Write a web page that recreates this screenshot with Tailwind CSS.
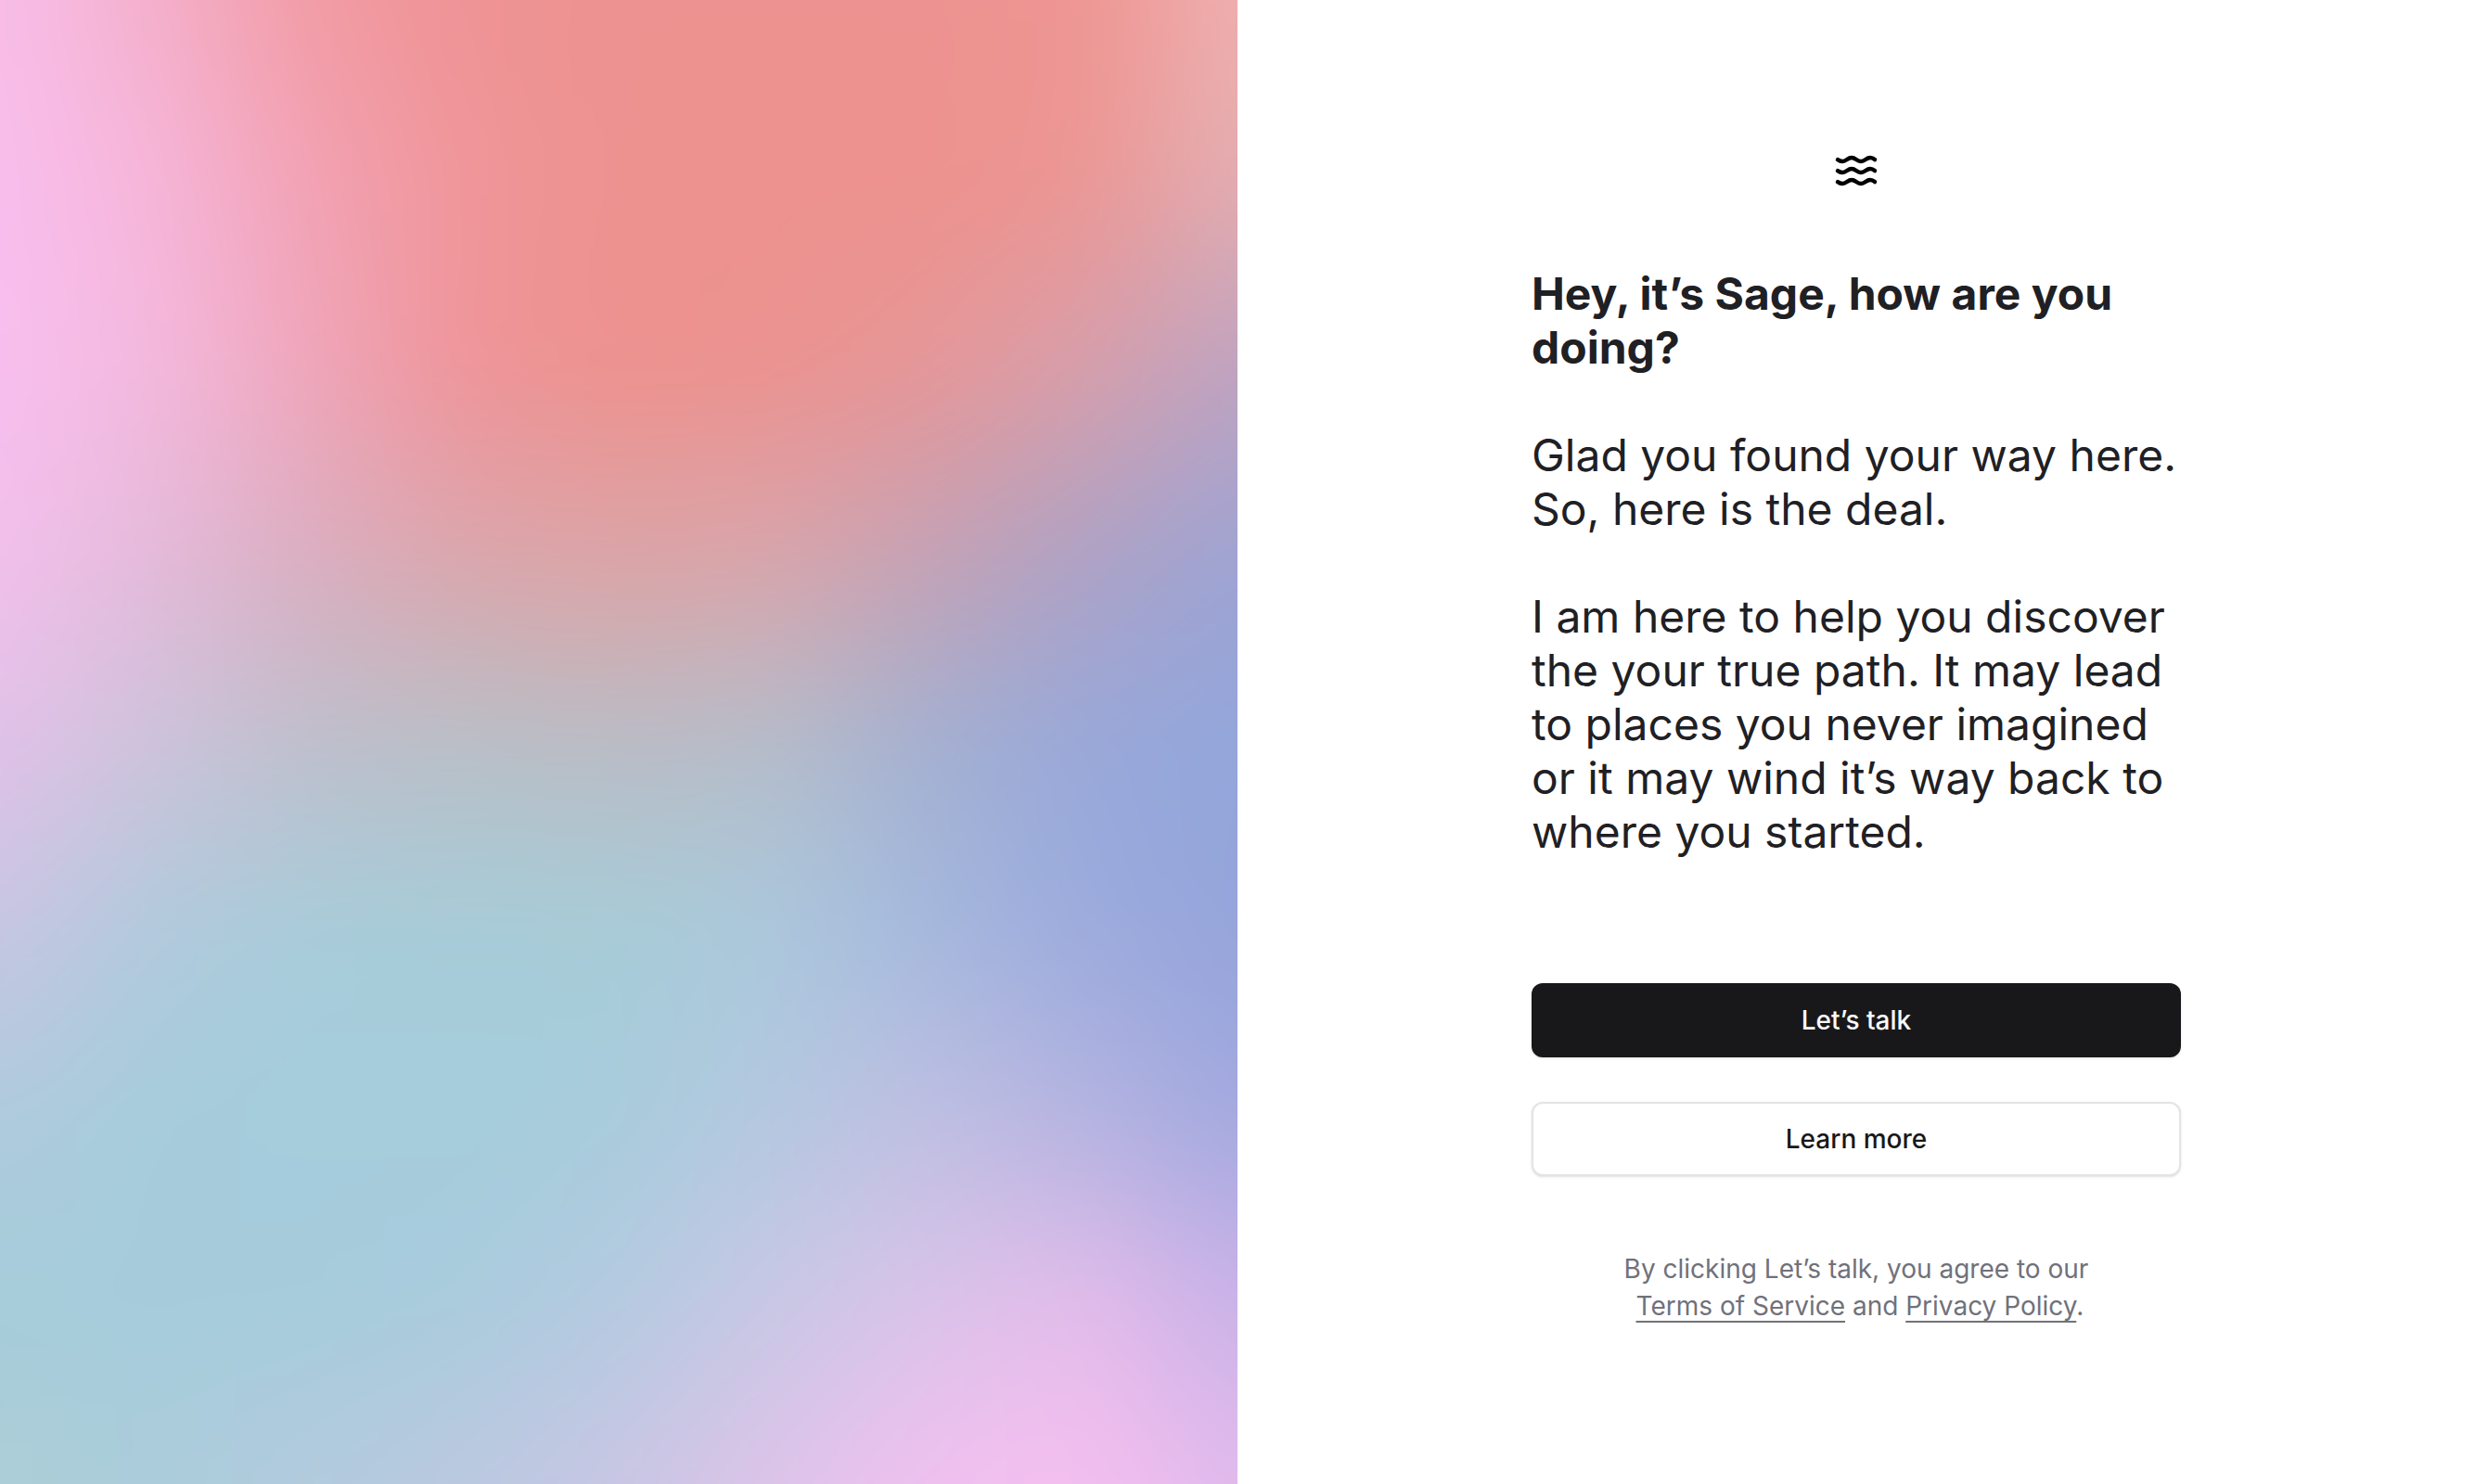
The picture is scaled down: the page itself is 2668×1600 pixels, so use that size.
<!DOCTYPE html>
<html lang="en">
<head>
<meta charset="utf-8">
<meta name="viewport" content="width=device-width, initial-scale=1">
<title>Sage</title>
<script src="https://cdn.jsdelivr.net/npm/@tailwindcss/browser@4"></script>
</head>
<body class="bg-white font-['Inter',sans-serif] text-[#1f2024]">
<div class="grid min-h-screen grid-cols-2">
  <aside class="relative overflow-hidden bg-[#c0b8cc]" aria-hidden="true">
    <svg id="mesh" class="absolute inset-0 size-full overflow-visible blur-[48px]" viewBox="0 0 8 8" preserveAspectRatio="none"></svg>
  </aside>
  <main class="flex flex-col items-center justify-center px-8 pb-1">
    <div class="flex w-full max-w-[700px] flex-col">
      <svg class="h-8 w-11 self-center overflow-visible" viewBox="0 0 44 32" fill="none" stroke="#000" stroke-width="4.5" stroke-linecap="round" role="img" aria-label="Sage">
        <path d="M2 4.200C3.600 5.300 5 6 7 6c4.500 0 5.500-4 10-4s5.500 4 10 4 5.500-4 10-4c2 0 3.400.7 5 2"/>
        <path d="M2 16.200C3.600 17.300 5 18 7 18c4.500 0 5.500-4 10-4s5.500 4 10 4 5.500-4 10-4c2 0 3.400.7 5 2"/>
        <path d="M2 28.200C3.600 29.300 5 30 7 30c4.500 0 5.500-4 10-4s5.500 4 10 4 5.500-4 10-4c2 0 3.400.7 5 2"/>
      </svg>
      <div class="mt-[88px] flex flex-col gap-[58px] text-[48px] leading-[58px]">
        <h1 class="font-bold">Hey, it’s Sage, how are you<br>doing?</h1>
        <p class="whitespace-nowrap">Glad you found your way here.<br>So, here is the deal.</p>
        <p class="whitespace-nowrap">I am here to help you discover<br>the your true path. It may lead<br>to places you never imagined<br>or it may wind it’s way back to<br>where you started.</p>
      </div>
      <div class="mt-[134px] flex flex-col gap-12 text-[28px] leading-10 font-medium">
        <button type="button" class="h-20 rounded-xl bg-[#18181a] text-[#fafafa] shadow-sm">Let’s talk</button>
        <button type="button" class="h-20 rounded-xl border-2 border-[#e4e4e5] bg-white text-[#18181a] shadow-sm">Learn more</button>
      </div>
      <p class="mt-20 text-center text-[28px] leading-10 text-[#71717a]">By clicking Let’s talk, you agree to our<br>&nbsp;<a href="#terms" class="underline decoration-2 underline-offset-[6px] [text-decoration-skip-ink:none]">Terms of Service</a> and <a href="#privacy" class="underline decoration-2 underline-offset-[6px] [text-decoration-skip-ink:none]">Privacy Policy</a>.</p>
    </div>
  </main>
</div>
<script>
  // Colour grid of the backdrop, top row first. Each row is a horizontal gradient
  // that fades in over the row above it.
  const rows = [
    'f8bee9 f4b0cb f29ca4 ef9395 ed9290 ed9290 ed9290 ee9592 f0b0b0',
    'f9beee f6b6da f2a2b4 f0969a ed928e ed928e ed928e ec9693 e2aeb2',
    'f8bfef f3b9de efa6ba ef9499 ed928e ec9290 e69798 d79fab bda3c2',
    'f2c0ec e4bada daaec0 dba6ac dca4a6 d9a5ab c5a2b5 aea2c5 9da4d4',
    'e2c1e8 cdc3db bebfcc b9bfc7 babcc5 b5bdca a3b0d1 98a8d9 93a6db',
    'c8c6e2 b0cadc a8ccda a6ccd8 a7ccd7 abc8dc a5b8dd 9cabdd 95a4db',
    'afcbdd a6ccdc a5cddc a5cddc a8ccdc b4c8e0 bfbfe2 b4b4e0 a2a9df',
    'a6ccda a6ccdb a6ccdc a9ccdd b4cae0 c8c8e5 dac3e9 e4bcea c9b2e8',
    'acced7 abccdb b2cbdd bbc8e0 c9c6e4 dec3e9 f0c0ef f6bfef e0baec'
  ];
  let defs = '', rects = '';
  rows.forEach((row, i) => {
    const stops = row.split(' ').map((c, k) => `<stop offset="${k / 8}" stop-color="#${c}"/>`).join('');
    defs += `<linearGradient id="row${i}" gradientUnits="userSpaceOnUse" x1="0" y1="0" x2="8" y2="0">${stops}</linearGradient>`;
    if (i) {
      defs += `<linearGradient id="fade${i}" gradientUnits="userSpaceOnUse" x1="0" y1="${i - 1}" x2="0" y2="${i}"><stop offset="0" stop-color="#fff" stop-opacity="0"/><stop offset="1" stop-color="#fff"/></linearGradient>`;
      defs += `<mask id="mask${i}" maskUnits="userSpaceOnUse" x="-1" y="-1" width="10" height="10"><rect x="-1" y="-1" width="10" height="10" fill="url(#fade${i})"/></mask>`;
    }
    rects += `<rect x="-1" y="-1" width="10" height="10" fill="url(#row${i})"${i ? ` mask="url(#mask${i})"` : ''}/>`;
  });
  document.getElementById('mesh').innerHTML = `<defs>${defs}</defs>${rects}`;
</script>
</body>
</html>
